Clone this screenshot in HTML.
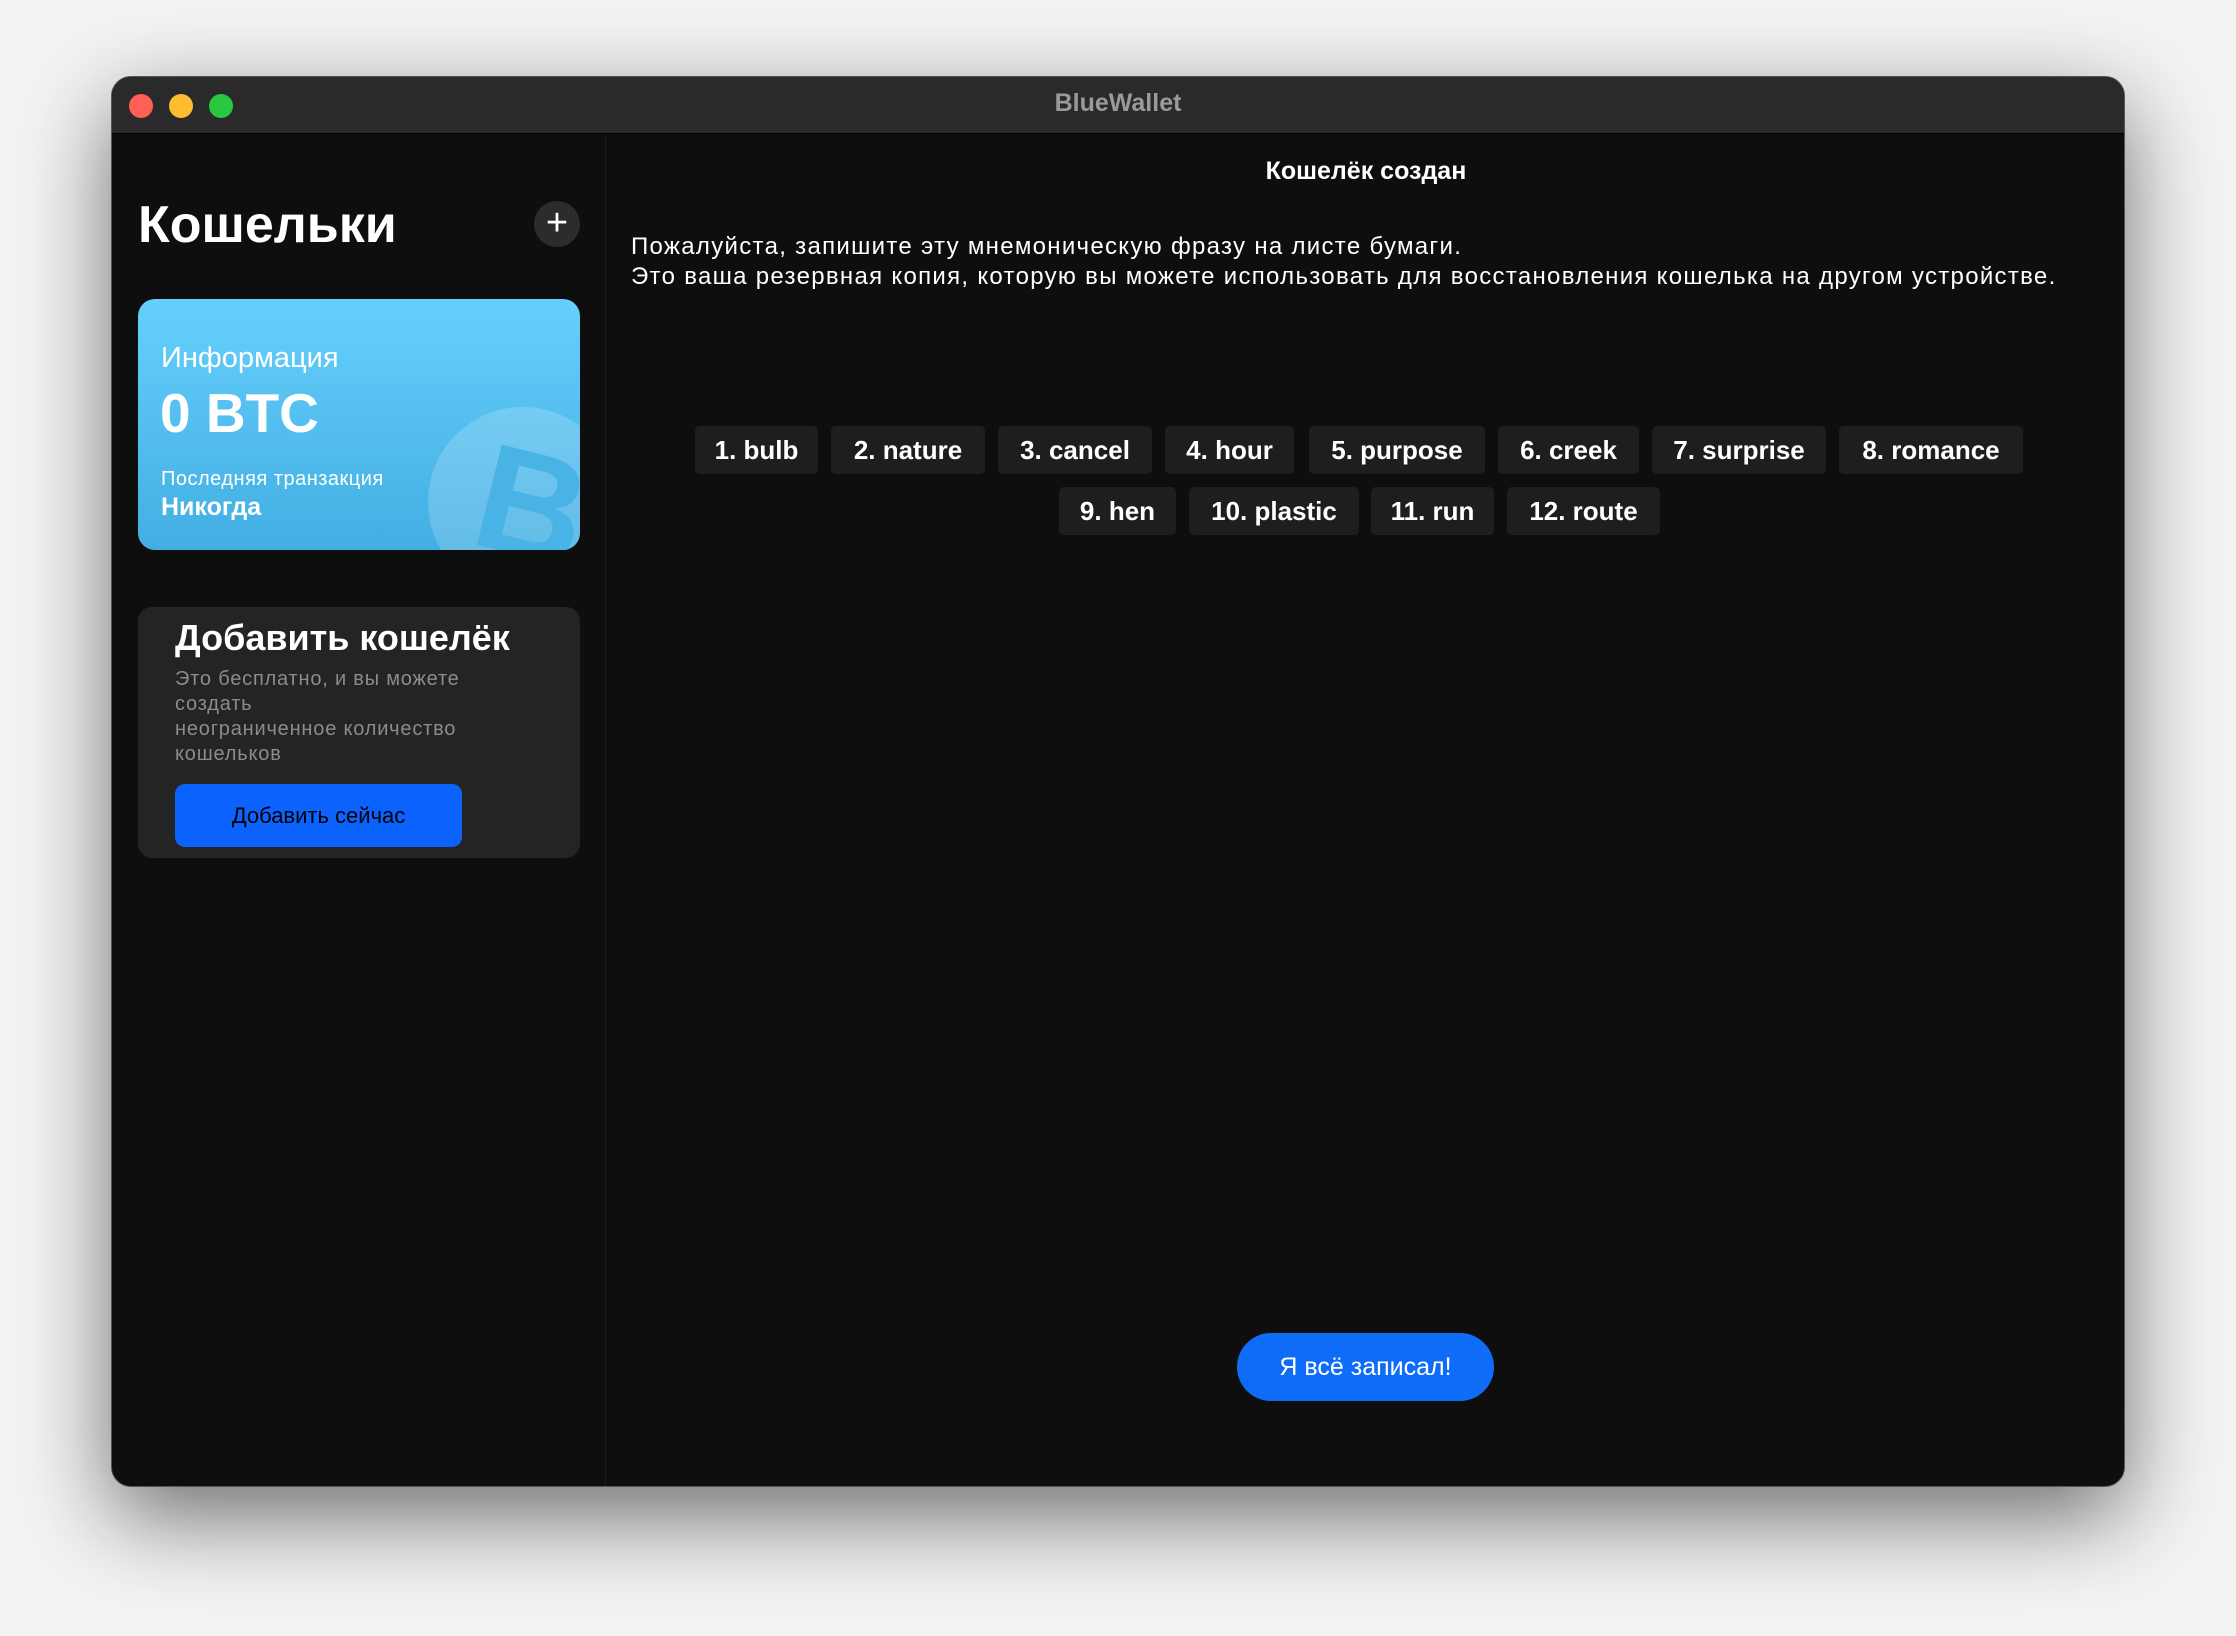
<!DOCTYPE html>
<html><head><meta charset="utf-8"><style>
*{margin:0;padding:0;box-sizing:border-box}
body{width:2236px;height:1636px;background:#f3f3f3;font-family:"Liberation Sans",sans-serif;position:relative;overflow:hidden}
.win{position:absolute;left:111px;top:76px;width:2014px;height:1411px;background:#0e0e0e;border-radius:20px;overflow:hidden;box-shadow:0 30px 90px rgba(0,0,0,.55);border:1px solid #555}
.tb{position:absolute;left:0;top:0;width:100%;height:57px;background:#2a2a2a;border-bottom:1px solid #000}
.tl{position:absolute;top:17px;width:24px;height:24px;border-radius:50%}
.abs{position:absolute}
.chip{position:absolute;height:48px;background:#1e1e1e;border-radius:5px;color:#fff;font-weight:bold;font-size:26px;line-height:48px;text-align:center}
</style></head><body>
<div class="win">
<div class="tb">
<div class="tl" style="left:17px;background:#fe5f57"></div>
<div class="tl" style="left:57px;background:#febc2e"></div>
<div class="tl" style="left:97px;background:#28c840"></div>
<div class="abs" style="left:0;width:100%;top:12px;text-align:center;color:#9a9a9a;font-weight:bold;font-size:25px">BlueWallet</div>
</div>
<div class="abs" style="left:493px;top:58px;width:1px;height:1360px;background:#1c1c1c"></div>
<div class="abs" style="left:26px;top:118px;color:#fff;font-weight:bold;font-size:52px">Кошельки</div>
<div class="abs" style="left:422px;top:124px;width:46px;height:46px;border-radius:50%;background:#2c2c2c;color:#fff;font-size:38px;line-height:44px;text-align:center">+</div>
<div class="abs" style="left:26px;top:222px;width:442px;height:251px;border-radius:17px;background:linear-gradient(180deg,#66d0fc,#42aee2);overflow:hidden">
<div class="abs" style="left:290px;top:108px;width:190px;height:190px;border-radius:50%;background:rgba(255,255,255,.18)"></div>
<div class="abs" style="left:340px;top:120px;font-size:150px;font-weight:bold;color:#48b3e4;transform:rotate(14deg)">B</div>
<div class="abs" style="left:23px;top:43px;color:#fff;font-size:29px">Информация</div>
<div class="abs" style="left:22px;top:82px;color:#fff;font-size:55px;font-weight:bold">0 BTC</div>
<div class="abs" style="left:23px;top:169px;color:#fff;font-size:20px;letter-spacing:.5px">Последняя транзакция</div>
<div class="abs" style="left:23px;top:194px;color:#fff;font-size:25px;font-weight:bold">Никогда</div>
</div>
<div class="abs" style="left:26px;top:530px;width:442px;height:251px;border-radius:14px;background:#242424">
<div class="abs" style="left:37px;top:10px;color:#fff;font-size:36px;font-weight:bold">Добавить кошелёк</div>
<div class="abs" style="left:37px;top:60px;color:#8b8b90;font-size:20px;line-height:25px;letter-spacing:.8px">Это бесплатно, и вы можете<br>создать<br>неограниченное количество<br>кошельков</div>
<div class="abs" style="left:37px;top:177px;width:287px;height:63px;border-radius:10px;background:#0b62fd;color:#000;font-size:22px;line-height:63px;text-align:center">Добавить сейчас</div>
</div>
<div class="abs" style="left:494px;width:1520px;top:80px;text-align:center;color:#fff;font-weight:bold;font-size:25px">Кошелёк создан</div>
<div class="abs" style="left:519px;top:155px;color:#fff;font-size:24px;line-height:30px;letter-spacing:1.3px">Пожалуйста, запишите эту мнемоническую фразу на листе бумаги.<br>Это ваша резервная копия, которую вы можете использовать для восстановления кошелька на другом устройстве.</div>
<div class="chip" style="left:583px;top:349px;width:123px">1. bulb</div>
<div class="chip" style="left:719px;top:349px;width:154px">2. nature</div>
<div class="chip" style="left:886px;top:349px;width:154px">3. cancel</div>
<div class="chip" style="left:1053px;top:349px;width:129px">4. hour</div>
<div class="chip" style="left:1197px;top:349px;width:176px">5. purpose</div>
<div class="chip" style="left:1386px;top:349px;width:141px">6. creek</div>
<div class="chip" style="left:1540px;top:349px;width:174px">7. surprise</div>
<div class="chip" style="left:1727px;top:349px;width:184px">8. romance</div>
<div class="chip" style="left:947px;top:410px;width:117px">9. hen</div>
<div class="chip" style="left:1077px;top:410px;width:170px">10. plastic</div>
<div class="chip" style="left:1259px;top:410px;width:123px">11. run</div>
<div class="chip" style="left:1395px;top:410px;width:153px">12. route</div>
<div class="abs" style="left:1125px;top:1256px;width:257px;height:68px;border-radius:34px;background:#0e6cf9;color:#fff;font-size:25px;line-height:68px;text-align:center">Я всё записал!</div>
</div>
</body></html>
